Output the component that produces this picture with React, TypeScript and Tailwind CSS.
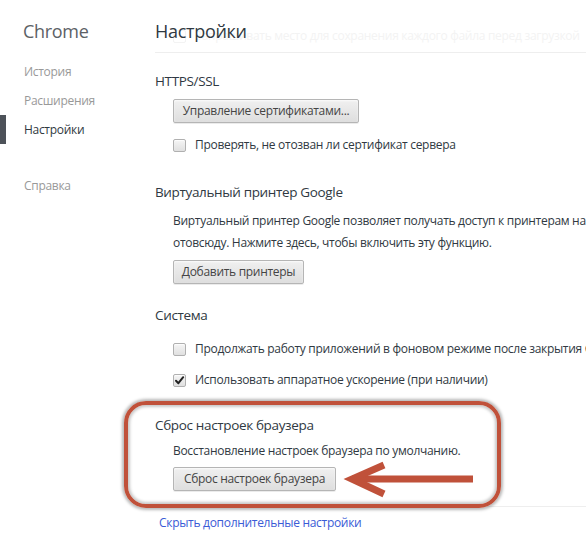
import React from "react";

const font = { fontFamily: '"Open Sans", "Noto Sans", sans-serif' };

function Btn({ children, w }: { children: React.ReactNode; w: string }) {
  return (
    <div
      className={`flex h-[24px] items-center justify-center whitespace-nowrap rounded-[2px] border border-[#b5b5b5] bg-gradient-to-b from-[#f0f0f0] to-[#dedede] text-[12px] text-[#444] shadow-[0_1px_0_rgba(0,0,0,0.08),inset_0_1px_2px_rgba(255,255,255,0.75)] ${w}`}
    >
      {children}
    </div>
  );
}

function Check({ checked, label }: { checked?: boolean; label: string }) {
  return (
    <div className="flex h-[20px] items-center whitespace-nowrap pl-[18px] text-[12px] text-[#303942]">
      <div className="relative mr-[9px] h-[13px] w-[13px] shrink-0 rounded-[2px] border border-[#b0b0b0] bg-gradient-to-b from-[#f5f5f5] to-[#e0e0e0] shadow-[inset_0_1px_1px_rgba(255,255,255,0.8)]">
        {checked && (
          <svg viewBox="0 0 13 13" className="absolute left-[-1px] top-[-1px] h-[13px] w-[13px]">
            <path d="M3 6.8 L5.4 9.2 L10.2 3.2" fill="none" stroke="#222" strokeWidth="2" strokeLinecap="round" strokeLinejoin="round" />
          </svg>
        )}
      </div>
      <span>{label}</span>
    </div>
  );
}

export default function App() {
  return (
    <div className="relative flex h-[558px] w-[586px] overflow-hidden bg-white tracking-[-0.3px]" style={font}>
      {/* sidebar */}
      <div className="w-[155px] shrink-0">
        <div className="pl-[23px] pt-[19px] text-[18px] leading-[24px] text-[#5c6166]">Chrome</div>
        <div className="mt-[14px]">
          <div className="flex h-[29px] items-center pl-[24px] text-[12px] text-[#999]">История</div>
          <div className="flex h-[29px] items-center pl-[24px] text-[12px] text-[#999]">Расширения</div>
          <div className="flex h-[29px] items-center border-l-[6px] border-[#4d5259] pl-[18px] text-[12px] text-[#303942]">
            Настройки
          </div>
          <div className="mt-[27px] flex h-[29px] items-center pl-[24px] text-[12px] text-[#999]">Справка</div>
        </div>
      </div>

      {/* main */}
      <div className="min-w-0 flex-1 overflow-hidden">
        <div className="relative h-[53px] border-b border-[#eeeeee]">
          <div className="absolute left-[18px] top-[27px] flex items-center whitespace-nowrap text-[12px] text-[#f3f3f3]">
            <div className="mr-[9px] h-[13px] w-[13px] rounded-[2px] border border-[#f3f3f3]" />
            Запрашивать место для сохранения каждого файла перед загрузкой
          </div>
          <div className="relative pt-[19px] text-[18px] leading-[24px] text-[#303942]">Настройки</div>
        </div>

        <div className="mt-[18px] text-[13.5px] leading-[20px] tracking-[-0.35px] text-[#303942]">HTTPS/SSL</div>
        <div className="mt-[8px] pl-[18px]">
          <Btn w="w-[186px]">Управление сертификатами...</Btn>
        </div>
        <div className="mt-[12px]">
          <Check label="Проверять, не отозван ли сертификат сервера" />
        </div>

        <div className="mt-[27px] text-[13.5px] leading-[20px] tracking-[-0.35px] text-[#303942]">Виртуальный принтер Google</div>
        <div className="mt-[8px] whitespace-nowrap pl-[18px] text-[12px] leading-[22px] text-[#303942]">
          <div>Виртуальный принтер Google позволяет получать доступ к принтерам на этом компьютере</div>
          <div>отовсюду. Нажмите здесь, чтобы включить эту функцию.</div>
        </div>
        <div className="mt-[6px] pl-[18px]">
          <Btn w="w-[131px]">Добавить принтеры</Btn>
        </div>

        <div className="mt-[21px] text-[13.5px] leading-[20px] tracking-[-0.35px] text-[#303942]">Система</div>
        <div className="mt-[14px]">
          <Check label="Продолжать работу приложений в фоновом режиме после закрытия Google Chrome" />
        </div>
        <div className="mt-[11px]">
          <Check checked label="Использовать аппаратное ускорение (при наличии)" />
        </div>

        <div className="mt-[25px] text-[13.5px] leading-[20px] tracking-[-0.35px] text-[#303942]">Сброс настроек браузера</div>
        <div className="mt-[6px] pl-[18px] text-[12px] leading-[20px] text-[#303942]">
          Восстановление настроек браузера по умолчанию.
        </div>
        <div className="mt-[6px] pl-[18px]">
          <Btn w="w-[163px]">Сброс настроек браузера</Btn>
        </div>
        <div className="mt-[15px] h-px bg-[#eeeeee]" />
        <div className="mt-[6px] pl-[4px] text-[12px] leading-[20px] text-[#3a5bd6]">Скрыть дополнительные настройки</div>
      </div>

      {/* annotation frame */}
      <div className="pointer-events-none absolute left-[124px] top-[401px] h-[107px] w-[377px] rounded-[22px] border-[4px] border-[#c0513a] shadow-[0_0_3px_2px_rgba(0,0,0,0.28),inset_0_0_3px_2px_rgba(0,0,0,0.22)]" />
      {/* annotation arrow */}
      <svg className="pointer-events-none absolute left-[340px] top-[455px]" width="140" height="48" viewBox="0 0 140 48">
        <path d="M12 24 H133" stroke="#c0513a" strokeWidth="7" fill="none" />
        <path d="M44 10 L12 24 L44 39" stroke="#c0513a" strokeWidth="7" fill="none" strokeLinejoin="miter" />
      </svg>
    </div>
  );
}
